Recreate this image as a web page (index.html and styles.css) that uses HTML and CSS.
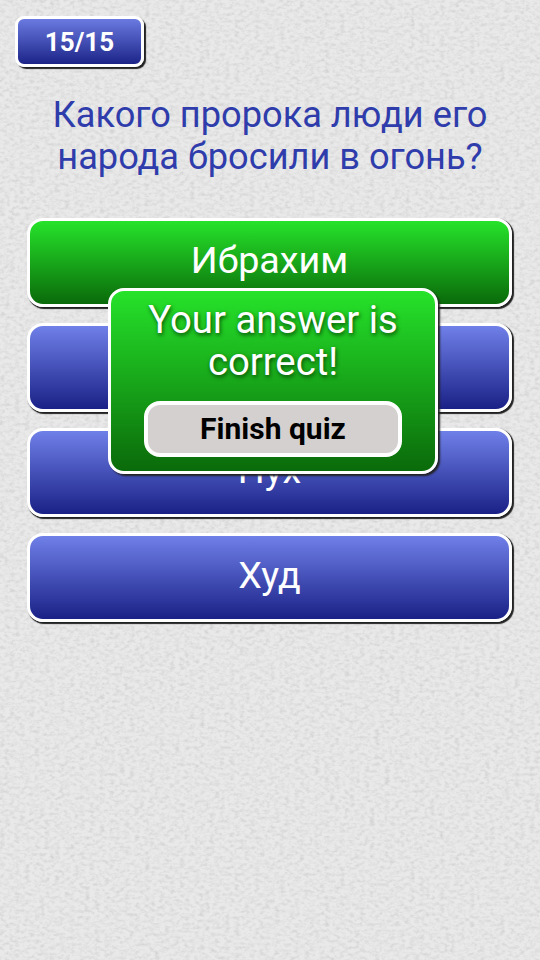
FILE: index.html
```html
<!DOCTYPE html>
<html lang="ru">
<head>
<meta charset="utf-8">
<title>Quiz</title>
<link rel="stylesheet" href="styles.css">
</head>
<body>
<svg class="paper" width="540" height="960" aria-hidden="true">
  <filter id="grain" x="0" y="0" width="100%" height="100%">
    <feTurbulence type="fractalNoise" baseFrequency="0.2 0.3" numOctaves="4" seed="7"/>
    <feColorMatrix type="matrix" values="0 0 0 0 0.45  0 0 0 0 0.45  0 0 0 0 0.45  1.5 1.5 0 0 -1.3"/>
  </filter>
  <rect width="540" height="960" fill="#e9e9e9"/>
  <rect width="540" height="960" filter="url(#grain)" opacity="0.38"/>
</svg>
<main class="screen">
  <div class="badge">15/15</div>
  <h1 class="question">Какого пророка люди его<br>народа бросили в огонь?</h1>
  <div class="answers">
    <div class="answer correct">Ибрахим</div>
    <div class="answer"></div>
    <div class="answer">Нух</div>
    <div class="answer">Худ</div>
  </div>
</main>
<div class="popup">
  <p class="popup-text">Your answer is correct!</p>
  <div class="finish">Finish quiz</div>
</div>
</body>
</html>
```
FILE: styles.css
```css
* { box-sizing: border-box; }
html, body { margin: 0; padding: 0; }
body {
  width: 540px;
  height: 960px;
  position: relative;
  overflow: hidden;
  font-family: Roboto, "Noto Sans", sans-serif;
  background: #e9e9e9;
}
.paper { position: absolute; left: 0; top: 0; }
.screen {
  position: relative;
  display: flex;
  flex-direction: column;
  padding: 16px 28px 0 15px;
}
.badge {
  width: 129px;
  height: 51px;
  border: 3px solid #fff;
  border-radius: 9px;
  background: linear-gradient(#6a7ae0, #1c2488);
  box-shadow: 2px 2px 1px #222;
  color: #fff;
  font-size: 26px;
  font-weight: 700;
  line-height: 46px;
  text-align: center;
}
.question {
  margin: 27px -16px 0 -3px;
  color: #2f3cab;
  font-size: 36.2px;
  font-weight: 400;
  line-height: 42px;
  text-align: center;
}
.answers {
  display: flex;
  flex-direction: column;
  gap: 16px;
  margin: 40px 0 0 12px;
}
.answer {
  height: 89px;
  border: 3px solid #fff;
  border-radius: 16px;
  background: linear-gradient(#6f80e8, #1a2186);
  box-shadow: 1.5px 1.5px 1px #222;
  color: #fff;
  font-size: 37.7px;
  line-height: 78px;
  text-align: center;
}
.answer.correct { background: linear-gradient(#26e32a, #0a6a0a); }
.popup {
  position: absolute;
  left: 108px;
  top: 288px;
  width: 330px;
  height: 186px;
  padding: 8px 33px 0;
  border: 3px solid #fff;
  border-radius: 16px;
  background: linear-gradient(#26e32a, #0a6a0a);
  box-shadow: 2px 2px 2px #222;
}
.popup-text {
  margin: 0;
  color: #fff;
  font-size: 38.3px;
  line-height: 42px;
  text-align: center;
  text-shadow: 1px 2px 4px #064a06;
}
.finish {
  margin-top: 18px;
  height: 56px;
  border: 4px solid #fff;
  border-radius: 16px;
  background: #d4d0d0;
  color: #000;
  font-size: 30px;
  font-weight: 700;
  line-height: 48px;
  text-align: center;
}
```
